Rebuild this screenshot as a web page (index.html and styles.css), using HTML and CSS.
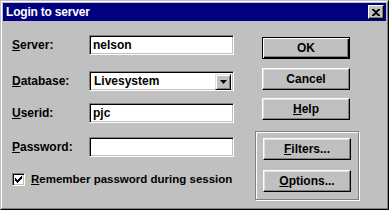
FILE: index.html
```html
<!DOCTYPE html>
<html>
<head>
<meta charset="utf-8">
<link rel="stylesheet" href="styles.css">
</head>
<body>
<div class="window">
  <div class="frame">
    <div class="titlebar">
      <span class="title">Login to server</span>
      <span class="close">
        <svg width="8" height="7" viewBox="0 0 8 7"><path d="M0 0h2l2 2 2-2h2v1L5 3.5 8 6v1H6L4 5 2 7H0V6l3-2.5L0 1z" fill="#000"/></svg>
      </span>
    </div>
    <div class="content">
      <div class="form">
        <div class="row r-server">
          <span class="label"><u>S</u>erver:</span>
          <span class="field">nelson</span>
        </div>
        <div class="row r-db">
          <span class="label"><u>D</u>atabase:</span>
          <span class="field combo">Livesystem<span class="drop"><svg width="7" height="4" viewBox="0 0 7 4"><path d="M0 0h7L3.5 4z" fill="#000"/></svg></span></span>
        </div>
        <div class="row r-user">
          <span class="label"><u>U</u>serid:</span>
          <span class="field">pjc</span>
        </div>
        <div class="row r-pass">
          <span class="label"><u>P</u>assword:</span>
          <span class="field"></span>
        </div>
        <div class="check">
          <span class="box"><svg width="7" height="7" viewBox="0 0 7 7"><path d="M0 2h1v1h1v1h1V3h1V2h1V1h1V0h1v3H6v1H5v1H4v1H3v1H2V6H1V5H0z" fill="#000"/></svg></span>
          <span class="check-label"><u>R</u>emember password during session</span>
        </div>
      </div>
      <div class="side">
        <span class="btn default">OK</span>
        <span class="btn cancel">Cancel</span>
        <span class="btn help"><u>H</u>elp</span>
        <div class="group">
          <span class="btn"><u>F</u>ilters...</span>
          <span class="btn options"><u>O</u>ptions...</span>
        </div>
      </div>
    </div>
  </div>
</div>
</body>
</html>
```
FILE: styles.css
```css
html, body {
  margin: 0;
  padding: 0;
  background: #c0c0c0;
}
body {
  width: 389px;
  height: 210px;
  overflow: hidden;
  font-family: "Liberation Sans", Arial, sans-serif;
  font-weight: bold;
  font-size: 12px;
  color: #000;
}
.window {
  width: 389px;
  height: 210px;
  box-sizing: border-box;
  border: 1px solid;
  border-color: #c0c0c0 #000 #000 #c0c0c0;
}
.frame {
  height: 100%;
  box-sizing: border-box;
  border: 1px solid;
  border-color: #fff #808080 #808080 #fff;
  padding: 1px;
  display: flex;
  flex-direction: column;
}
.titlebar {
  height: 18px;
  background: #000080;
  color: #fff;
  display: flex;
  align-items: center;
  justify-content: space-between;
  padding: 0 2px 0 3px;
}
.title {
  font-size: 12px;
  letter-spacing: -0.2px;
}
.close {
  width: 16px;
  height: 14px;
  box-sizing: border-box;
  background: #c0c0c0;
  border: 1px solid;
  border-color: #fff #000 #000 #fff;
  box-shadow: inset -1px -1px #808080;
  display: flex;
  align-items: center;
  justify-content: center;
}
.content {
  flex: 1;
  display: flex;
  padding: 14px 0 0 9px;
}
.form {
  width: 222px;
  display: flex;
  flex-direction: column;
}
.row {
  display: flex;
  align-items: center;
  height: 20px;
}
.r-db { margin-top: 16px; }
.r-user { margin-top: 12px; }
.r-pass { margin-top: 14px; }
.label {
  width: 77px;
}
.field {
  width: 145px;
  height: 20px;
  box-sizing: border-box;
  background: #fff;
  border: 1px solid;
  border-color: #808080 #fff #fff #808080;
  box-shadow: inset 1px 1px #000, inset -1px -1px #c0c0c0;
  padding: 0 3px;
  line-height: 18px;
  position: relative;
}
.combo {
  padding-left: 4px;
}
.drop {
  position: absolute;
  right: 2px;
  top: 2px;
  width: 16px;
  height: 16px;
  box-sizing: border-box;
  background: #c0c0c0;
  border: 1px solid;
  border-color: #dfdfdf #000 #000 #dfdfdf;
  box-shadow: inset 1px 1px #fff, inset -1px -1px #808080;
  display: flex;
  align-items: center;
  justify-content: center;
}
.check {
  display: flex;
  align-items: center;
  height: 13px;
  margin-top: 16px;
  white-space: nowrap;
}
.check-label {
  font-size: 11.5px;
  line-height: 13px;
}
.box {
  flex: none;
  width: 13px;
  height: 13px;
  box-sizing: border-box;
  background: #fff;
  border: 1px solid;
  border-color: #808080 #fff #fff #808080;
  box-shadow: inset 1px 1px #000, inset -1px -1px #c0c0c0;
  display: flex;
  align-items: center;
  justify-content: center;
  margin-right: 6px;
}
.side {
  margin-left: 21px;
  width: 104px;
  display: flex;
  flex-direction: column;
  align-items: flex-start;
}
.btn {
  width: 88px;
  height: 22px;
  box-sizing: border-box;
  background: #c0c0c0;
  border: 1px solid;
  border-color: #fff #000 #000 #fff;
  box-shadow: inset -1px -1px #808080, inset 1px 1px #dfdfdf;
  display: flex;
  align-items: center;
  justify-content: center;
  margin-left: 7px;
}
.btn.default {
  margin-top: 2px;
  border-color: #000;
  box-shadow: inset 1px 1px #fff, inset -1px -1px #000, inset -2px -2px #808080;
}
.cancel { margin-top: 9px; }
.help { margin-top: 8px; }
.group {
  margin-top: 11px;
  width: 104px;
  height: 69px;
  box-sizing: border-box;
  border: 1px solid #808080;
  box-shadow: inset 1px 1px #fff, 1px 1px #fff;
  padding-top: 6px;
  display: flex;
  flex-direction: column;
}
.options { margin-top: 10px; }
```
